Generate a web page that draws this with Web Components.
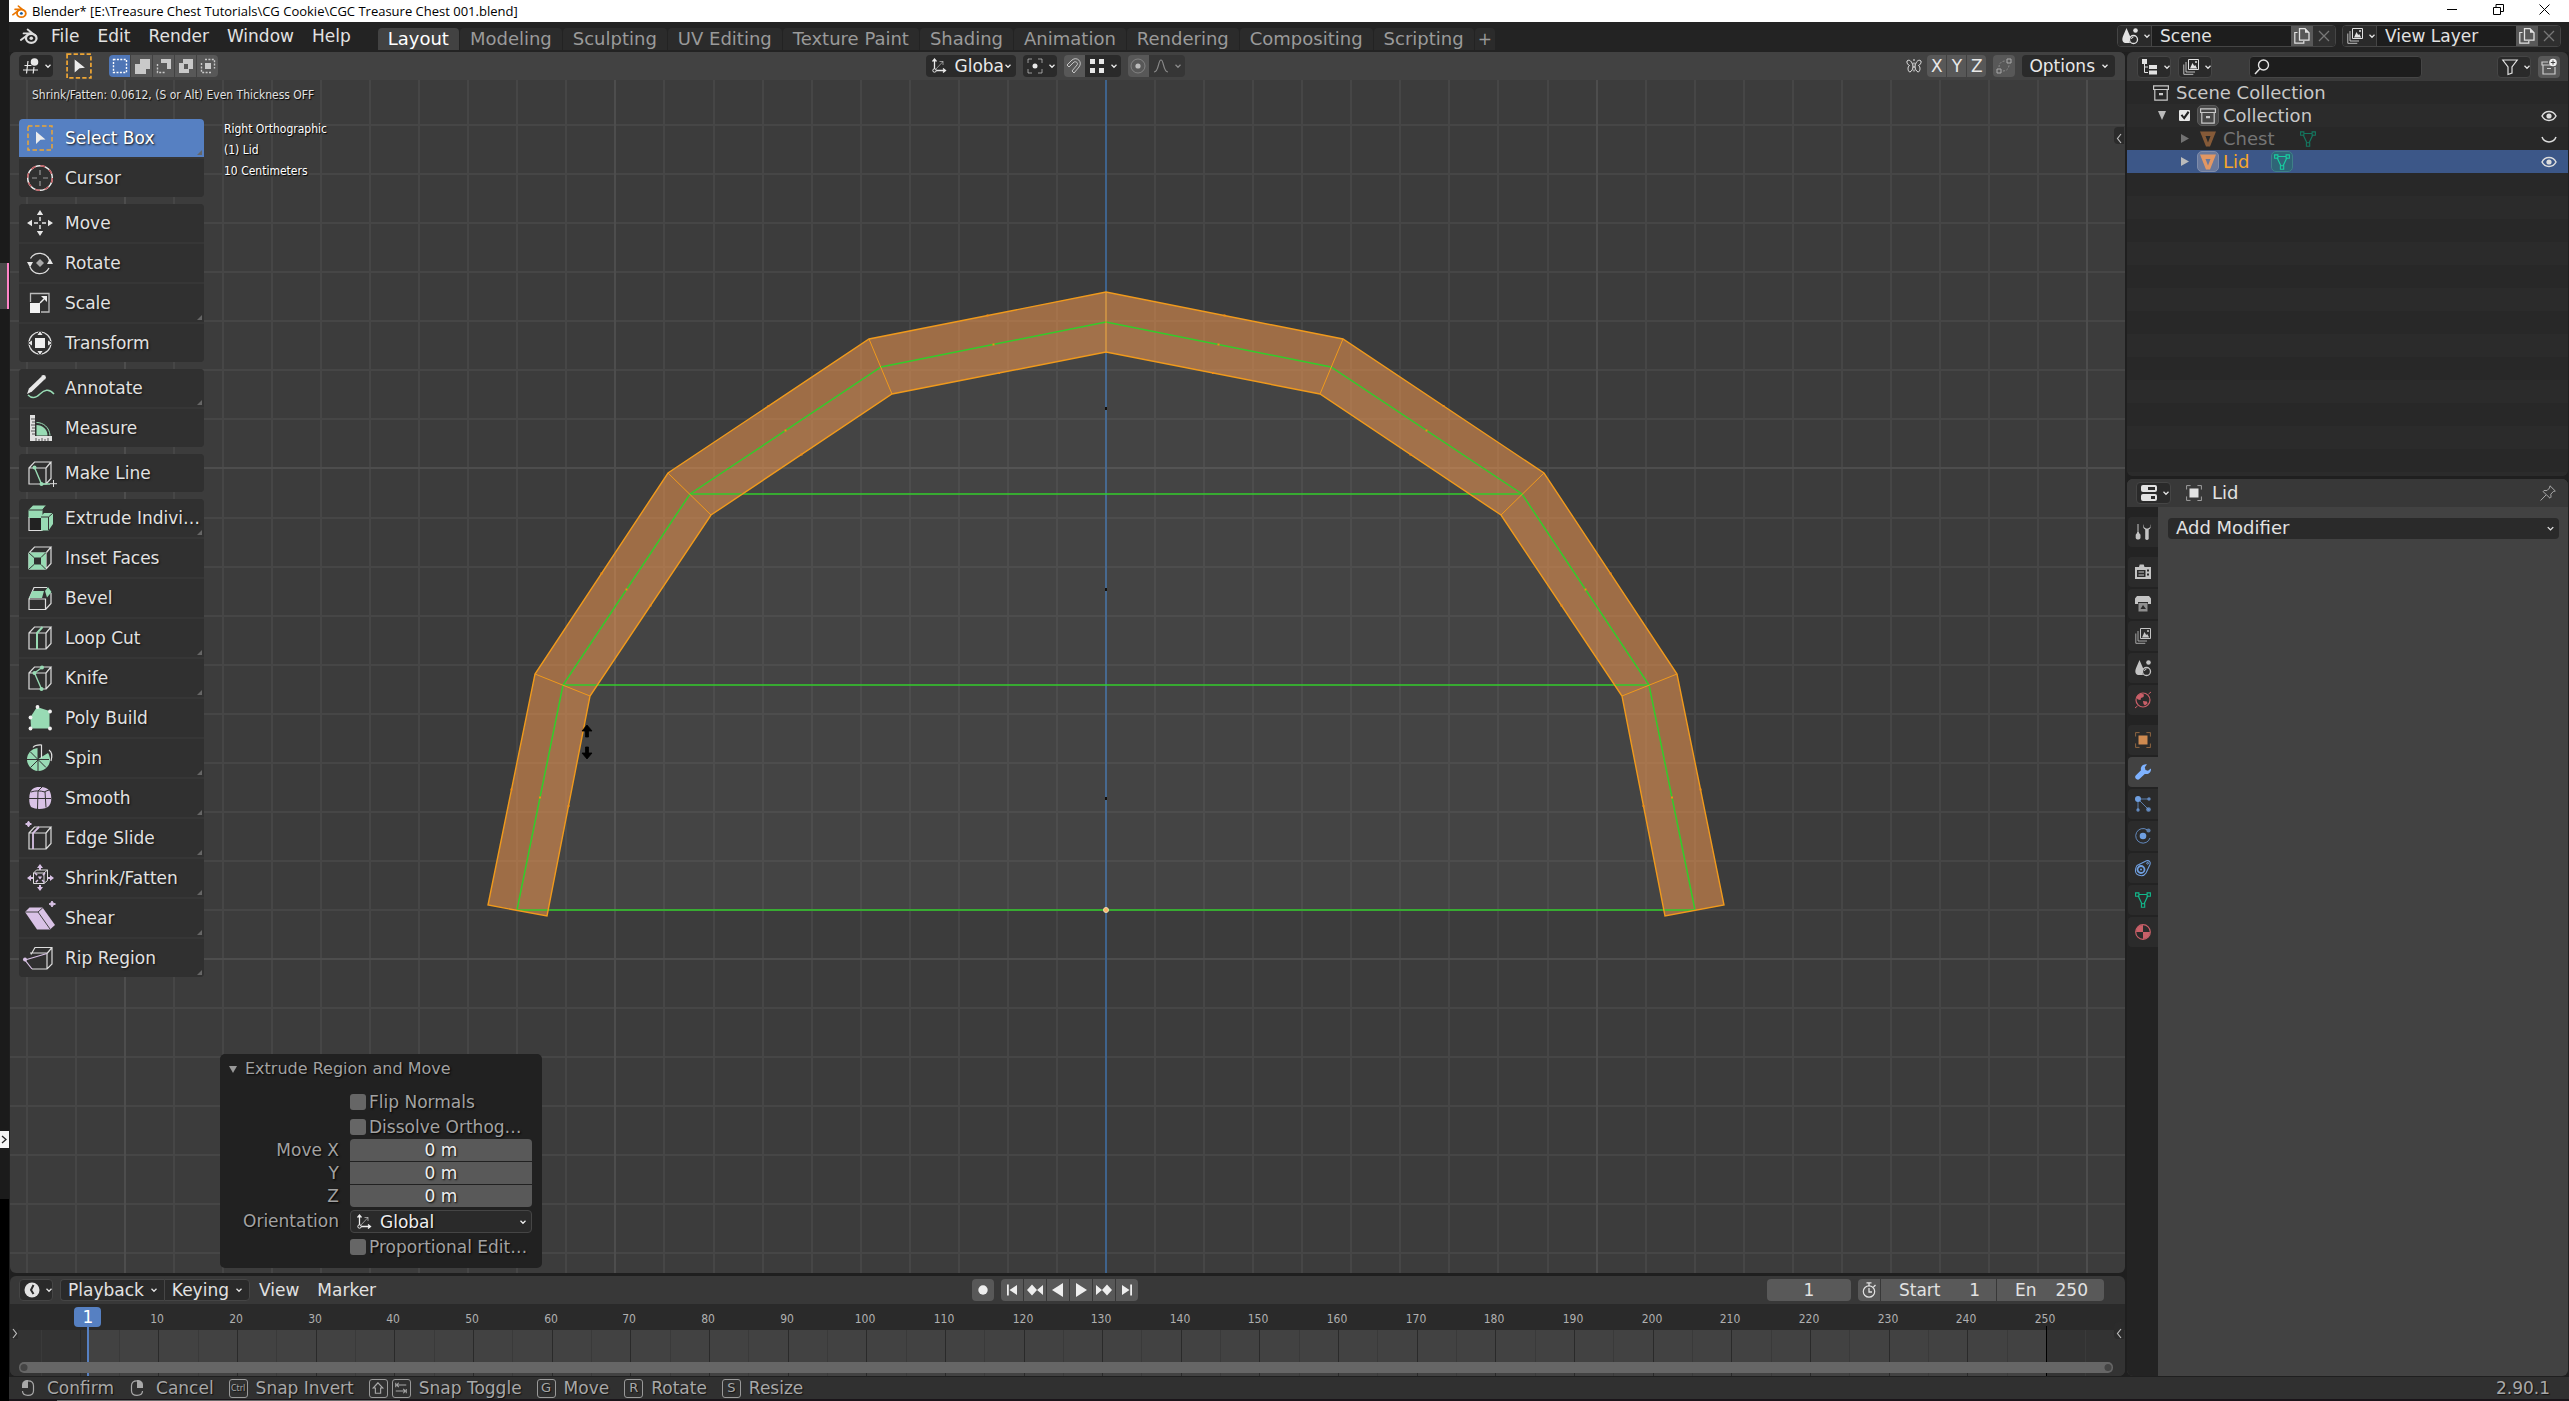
<!DOCTYPE html>
<html lang="en">
<head>
<meta charset="utf-8">
<title>Blender</title>
<style>
html,body{margin:0;height:100%;background:#1f1f1f}
body{font-family:"DejaVu Sans","Liberation Sans",sans-serif;font-size:17px;line-height:22px;color:#e2e2e2;overflow:hidden}
</style>
</head>
<body>
<blender-app></blender-app>
<script>
const BASE = `
*{box-sizing:border-box}
:host{display:block}
:host([hidden]){display:none}
button,input,select{font:inherit;color:inherit;margin:0;padding:0;border:0;background:none;outline:0;appearance:none;border-radius:0;text-shadow:inherit}
button{display:inline-flex;align-items:center;justify-content:center;white-space:nowrap}
`;
const define = (name, css, html, ready) => customElements.define(name, class extends HTMLElement {
  connectedCallback(){
    if(this.shadowRoot) return;
    const t = document.createElement('template');
    t.innerHTML = `<style>${BASE}${css}</style>` + (typeof html === 'function' ? html(this) : html);
    this.attachShadow({mode:'open'}).append(t.content.cloneNode(true));
    if(ready) ready(this.shadowRoot, this);
  }
});

/* ---------- icons: 16-unit grid for headers, 28-unit grid for tools ---------- */
const cube = '<path d="M3 9H20V25H3ZM3 9L8.500 3H25L20 9M25 3V19.500L20 25" fill="none" stroke="#dcdcdc" stroke-width="1.200"/>';
const S = 'fill="none" stroke="currentColor"';
const images = '<path d="M5.500 .5h10v10h-10z" '+S+'/><path d="M7 9.500L9.500 4l1.700 3 1-1 2 3.500z" fill="currentColor"/><circle cx="13" cy="3" r="1" fill="currentColor"/><path d="M3 3v10h9M.8 5.500v9.800h9.500" '+S+' opacity=".8"/>';
const meshTri = (c)=>`<path d="M3 3.500L7 12M13 3.500L9 12M4 2.500h8" fill="none" stroke="${c}" stroke-width="1.200"/><path d="M.6 .9h3.300v3.300H.6zM12.100 .9h3.300v3.300h-3.300zM6.400 11.800h3.300v3.500H6.400z" fill="none" stroke="${c}" stroke-width="1.100"/>`;
const ICONS = {
  logo:'<path d="M.8 11.500L8.500 5.700H3.200M6.800 2.200L14 8" fill="none" stroke="currentColor" stroke-width="1.700" stroke-linecap="round"/><ellipse cx="10" cy="10" rx="4.700" ry="4" fill="none" stroke="currentColor" stroke-width="2"/><circle cx="10" cy="10" r="1.600" fill="var(--eye,currentColor)"/>',
  chev:'<path d="M4 6l4 4 4-4" fill="none" stroke="currentColor" stroke-width="2"/>',
  view3d:'<circle cx="11.500" cy="4" r="3.800" fill="currentColor"/><path d="M5 3L3.500 15.500M11 9l-.8 6.500M1.500 7.500h7M0 12h15" '+S+' stroke-width="1.200"/>',
  axes:'<path d="M3.500 1.500v11h10M1.500 3.500l2-2.500 2 2.500M12 10.500l2.500 2-2.500 2" '+S+' stroke-width="1.300"/><path d="M4 12L12 3.500M8.500 3.500H12V7" '+S+' opacity=".55"/><circle cx="3.500" cy="12.500" r="1.700" fill="#2b2b2b" stroke="currentColor"/>',
  pivot:'<path d="M1 5V1h4M11 1h4v4M15 11v4h-4M5 15H1v-4" '+S+' opacity=".6"/><circle cx="8" cy="8" r="2.500" fill="currentColor"/>',
  magnet:'<path d="M1 7L6 2c5-4 11 2 7 7l-5 6-2-2 5-6c1.500-2-1-4-3-3L3 9z" '+S+' opacity=".75"/>',
  grid4:'<path d="M1 1h5v5H1zM10 1h5v5h-5zM1 10h5v5H1zM10 10h5v5h-5z" fill="currentColor"/>',
  prop:'<circle cx="8" cy="8" r="7" '+S+' opacity=".35"/><circle cx="8" cy="8" r="2.600" fill="currentColor" opacity=".85"/>',
  falloff:'<path d="M1 14c5 0 4-12 7-12s2 12 7 12" '+S+' stroke-width="1.200"/>',
  butterfly:'<path d="M7 8C6 3 3 1 1 3c-.5 2 1 4 2.500 4.500C1 9 2 14 4 14c2-1 3-3 3-6M9 8c1-5 4-7 6-5 .5 2-1 4-2.500 4.500C15 9 14 14 12 14c-2-1-3-3-3-6" '+S+'/><path d="M8 1v14" '+S+' stroke-dasharray="2 1.500"/>',
  curve:'<path d="M1 11h4v4H1zM11 1h4v4h-4z" '+S+'/><path d="M3 9C3 5 6 3 9 3M7 13c4 0 6-3 6-6" '+S+' stroke-dasharray="2 1.500" opacity=".6"/>',
  cursorbox:'<rect x="1" y="1" width="22" height="22" fill="none" stroke="#eda535" stroke-width="1.600" stroke-dasharray="4 2"/><path d="M8 6l9.500 7.500-5 .5L8 18z" fill="#ececec"/>',
  selnew:'<path d="M1.500 1.500h13v13h-13z" fill="none" stroke="#fff" stroke-width="1.400" stroke-dasharray="2 1.400"/>',
  selext:'<path d="M6 1h10v10h-4v5H1V6h5z" fill="currentColor"/>',
  selsub:'<path d="M5 1h10v10h-4V5H5z" fill="currentColor"/><path d="M1.500 6v8.500H9" '+S+' stroke-dasharray="2 1.400" stroke-width="1.400"/>',
  seldif:'<path d="M5 1h10v10h-4v4H1V5h4zM6 6v5h4V6z" fill="currentColor" fill-rule="evenodd"/>',
  selint:'<path d="M5 5h6v6H5z" fill="currentColor"/><path d="M5 1.500h9.500v9M11 14.500H1.500V5" '+S+' stroke-dasharray="2 1.400" stroke-width="1.400"/>',
  scene:'<path d="M4.500 0C6 4 8 7 8.500 10c-1.500 1-1.500 3-.5 5H3C-.5 14 0 10 1.500 7z" fill="currentColor"/><circle cx="13.500" cy="2.500" r="2.300" fill="currentColor"/><circle cx="11.500" cy="11.500" r="4" '+S+' stroke-width="1.300"/><path d="M9.500 11a2 2 0 0 1 2-2" '+S+'/>',
  images,
  copy:'<path d="M5.500 .7h5.500l4 4v7.500H5.500z" '+S+' stroke-width="1.300"/><path d="M11 .5v4.300h4z" fill="currentColor"/><path d="M3.500 4.500H.8v10.700h9V13" '+S+' stroke-width="1.200"/>',
  x:'<path d="M3 3l10 10M13 3L3 13" '+S+' stroke-width="1.300"/>',
  outliner:'<path d="M0 0h5v5H0zM7 6h8v4H7zM7 11.500h8v4H7z" fill="currentColor"/><path d="M2.500 5v8.500H6M2.500 8H6" '+S+'/>',
  search:'<circle cx="9.500" cy="6" r="5" '+S+' stroke-width="1.400"/><path d="M6 9.500L1 15" '+S+' stroke-width="1.500"/>',
  funnel:'<path d="M.8 1h14.400L10 8v6l-4 1.500V8z" '+S+' stroke-width="1.200"/>',
  newcol:'<path d="M7 3H1v3h14M2 6v9h12V8M6 9.500h4" '+S+' stroke-width="1.200"/><circle cx="12" cy="3.500" r="3.800" fill="#f0f0f0"/><path d="M12 1.300v4.400M9.800 3.500h4.400" stroke="#444"/>',
  collection:'<path d="M.6 .8h14.800v3.700H.6zM1.800 4.500v10.700h12.400V4.500" '+S+' stroke-width="1.200"/><path d="M6 8h4v2.200H6z" fill="currentColor"/>',
  tri:'<path d="M0 .5h16L10 15.500H6zM5.500 5L8 11.500 10.500 5z" fill="currentColor" fill-rule="evenodd"/>',
  mesh:meshTri('currentColor'),
  eye:'<path d="M1 8C4 2 12 2 15 8 12 14 4 14 1 8z" '+S+' stroke-width="1.500"/><circle cx="8" cy="8" r="2.600" fill="currentColor"/>',
  eyeoff:'<path d="M1 6c2.500 6.500 11.500 6.500 14 0" '+S+' stroke-width="1.500"/>',
  props:'<rect x="0" y="0" width="16" height="7" rx="2" fill="currentColor"/><rect x="0" y="9" width="16" height="7" rx="2" fill="currentColor"/><path d="M7 2h7v3H7zM10 11h4v3h-4z" fill="#2b2b2b"/>',
  object:'<path d="M.6 4.500V.6h4M11.400 .6h4v4M15.400 11.500v4h-4M4.500 15.400H.6v-4" '+S+' opacity=".6"/><path d="M3.500 3.500h9v9h-9z" fill="currentColor"/>',
  pin:'<path d="M10 .8L15.300 6l-2 .5-2.500 2.700.2 3-1 1L3 6.500l1-1 3 .1L9.500 3zM6 10L.6 15.500" '+S+'/>',
  tool:'<path d="M3 0v8" '+S+'/><path d="M.7 11c0-1.500 1.500-1 1.500-3h1.600c0 2 1.700 1.500 1.700 3v3c-1 2-4 2-4.800 0z" fill="currentColor"/><path d="M8.500 0c-1 3 0 4.500 1.700 5.500V15c1 1.300 2.500 1.300 3.500 0V5.500C15.500 4.500 16.500 3 15.400 0v3L13 4.500h-2L8.800 3z" fill="currentColor"/>',
  render:'<path d="M0 3h4l.7-2.500h4L9.500 3H16v12H0zM2 6v7h8.500V6zM12 5.500v2h2v-2zM12 9.500v2h2v-2z" fill="currentColor" fill-rule="evenodd"/><path d="M3.500 8H9M3.500 11H9" '+S+'/>',
  output:'<path d="M2 0h12l2 2.500V8h-3V6H3v2H0V2.500z" fill="currentColor"/><path d="M3.500 7h9v8.500h-9z" fill="currentColor" opacity=".65"/><path d="M5.500 13L8 9l3 4z" fill="#2b2b2b"/>',
  world:'<circle cx="8" cy="8" r="7" '+S+' stroke-width="1.200"/><path d="M2 4l4-2.500 3 1L8.500 5 6 6l-.5 2L3 7.500 1.500 6zM8 9l4 .5.5 2L10 13.500 8.500 12z" fill="currentColor"/><path d="M16 0l-2.500 2M0 16l2.500-2" '+S+'/>',
  wrench:'<path d="M15.900 4.500L13 6.800 10.500 6 9.800 3.200 12 .3C8.500-.6 5 2.500 6 6.200L.7 11.500c-2 2 1.600 5.600 3.700 3.600L9.800 9.900c3.700 1 6.900-2 6.100-5.400z" fill="currentColor"/>',
  particles:'<path d="M3 3h10M3 3v11M3 3l11 11" '+S+' opacity=".7"/><circle cx="3" cy="3" r="3" fill="currentColor"/><circle cx="14" cy="3" r="1.700" fill="currentColor" opacity=".8"/><circle cx="3" cy="14" r="1.700" fill="currentColor" opacity=".8"/><circle cx="13.500" cy="13.500" r="2.300" fill="currentColor" opacity=".8"/>',
  physics:'<path d="M12 1.700A7.300 7.300 0 1 0 15 10" '+S+' opacity=".8"/><circle cx="8" cy="8" r="3.300" fill="currentColor"/><circle cx="13.500" cy="2.500" r="2.100" fill="currentColor" opacity=".7"/>',
  constraint:'<path d="M2 5.500L11.500 .8C14 0 16 2 15 4.500L11 13C8 18-1 15.500 .7 9 .9 7.500 1.200 6.500 2 5.500z" '+S+' stroke-width="1.100"/><circle cx="6" cy="9.500" r="3.500" '+S+' stroke-width="1.800"/><circle cx="6" cy="9.500" r="1" fill="currentColor"/><circle cx="12.600" cy="3.300" r=".9" '+S+'/>',
  material:'<circle cx="8" cy="8" r="7.300" '+S+' stroke-width="1.200"/><path d="M8 8V1A7 7 0 0 0 1 8zM8 8v7a7 7 0 0 0 7-7z" fill="currentColor"/>',
  clock:'<circle cx="8" cy="8" r="7.500" fill="currentColor"/><path d="M9.500 3L7 8l2.500 4" fill="none" stroke="#2b2b2b" stroke-width="2"/>',
  watch:'<circle cx="8" cy="9.500" r="5.700" '+S+' stroke-width="1.200"/><path d="M5.500 .8h5M8 1v3M8 6v4h3M12.500 5L14.500 3" '+S+' stroke-width="1.300"/>',
  rec:'<circle cx="8" cy="8" r="4.700" fill="currentColor"/>',
  first:'<path d="M3 2.500h1.800v11H3zM13 3v10L5.500 8z" fill="currentColor"/>',
  pkey:'<path d="M5 2.500L10 8l-5 5.500L0 8zM16 3v10l-6-5z" fill="currentColor"/>',
  back:'<path d="M13 1v14L2 8z" fill="currentColor"/>',
  play:'<path d="M3 1v14l11-7z" fill="currentColor"/>',
  nkey:'<path d="M11 2.500L16 8l-5 5.500L6 8zM0 3v10l6-5z" fill="currentColor"/>',
  last:'<path d="M11.200 2.500H13v11h-1.800zM3 3v10l7.500-5z" fill="currentColor"/>',
  lmb:'<path d="M8 .8c4 0 5.500 1.500 5.500 5v5c0 3-2 4.500-5.500 4.500S2.500 13.800 2.500 11" '+S+' stroke-width="1.200"/><path d="M8 0v8H2V5c0-3 2-5 6-5z" fill="currentColor"/>',
  rmb:'<path d="M8 .8c-4 0-5.500 1.500-5.500 5v5c0 3 2 4.500 5.500 4.500s5.500-1.500 5.500-4.300" '+S+' stroke-width="1.200"/><path d="M8 0v8h6V5c0-3-2-5-6-5z" fill="currentColor"/>',
  shift:'<path d="M8 2L2.500 8H5v6h6V8h2.500z" '+S+' stroke-width="1.300"/>',
  tabkey:'<path d="M2 2v5M14 9v5M3 4.500h11M5.500 2L3 4.500 5.500 7M13 11.500H2M10.500 9l2.500 2.500-2.500 2.500" '+S+' stroke-width="1.200"/>',
  /* tools */
  t_select:'<rect x="2" y="2" width="24" height="24" fill="none" stroke="#eda535" stroke-width="1.500" stroke-dasharray="4.500 2.500"/><path d="M10 7.500l9.500 8-5 .3L10 20z" fill="#ececec"/>',
  t_cursor:'<circle cx="14" cy="14" r="12.300" fill="none" stroke="#eee" stroke-width="1.500"/><circle cx="14" cy="14" r="12.300" fill="none" stroke="#c05a5f" stroke-width="1.500" stroke-dasharray="4.800 4.860"/><path d="M14 6v5M14 17v5M6 14h5M17 14h5" stroke="#999" stroke-width="1.200"/>',
  t_move:'<path d="M14 1l3.200 5h-6.400zM14 27l3.200-5h-6.400zM1 14l5-3.200v6.400zM27 14l-5-3.200v6.400z" fill="#e6e6e6"/><path d="M14 8v4M14 16v4M8 14h4M16 14h4" stroke="#e6e6e6" stroke-width="1.500"/>',
  t_rotate:'<path d="M4.500 9.500a10.500 10.500 0 0 1 19 2M4 18a10.500 10.500 0 0 0 19 1" fill="none" stroke="#dcdcdc" stroke-width="1.300"/><path d="M1 13h6l-3 5.500zM21 15h6l-3-5.500z" fill="#e6e6e6"/><path d="M14 10l4 4-4 4-4-4z" fill="#aaa"/>',
  t_scale:'<path d="M4.500 13V4.500h18.500v18.500H15" fill="none" stroke="#bbb" stroke-width="1.300"/><path d="M4 14h10v10H4z" fill="#f2f2f2"/><path d="M14 14l4-4" stroke="#eee" stroke-width="1.500"/><path d="M21 7v6l-6-6z" fill="#eee"/>',
  t_transform:'<circle cx="14" cy="14" r="11" fill="none" stroke="#ddd" stroke-width="1.200"/><path d="M9 9h10v10H9z" fill="#f0f0f0"/><path d="M10.500 6.500L14 1.500l3.500 5zM10.500 21.500L14 26.500l3.500-5zM6.500 10.500L1.500 14l5 3.500zM21.500 10.500L26.500 14l-5 3.500z" fill="#e6e6e6" stroke="#303030"/>',
  t_annotate:'<path d="M1 20L3 14.500 15 3l3 3L6 17.500z" fill="#e8e8e8"/><circle cx="17.500" cy="3.500" r="2.400" fill="#e8e8e8"/><path d="M2 21c4 4 8 3 12-1s9-6 14 0" fill="none" stroke="#98dbb4" stroke-width="1.400"/>',
  t_measure:'<path d="M4 1h5v21h17v5H4z" fill="#e0e0e0"/><path d="M5 5h4M6 8h3M5 11h4M6 14h3M5 17h4M6 20h3M10 27v-3M13 27v-2M16 27v-3M19 27v-2M22 27v-3" stroke="#555"/><path d="M10.500 21.500V11c6 0 11 4.500 11 10.500z" fill="#98dbb4"/><path d="M10.500 8.500c7 0 13 5 13.500 13" fill="none" stroke="#98dbb4"/>',
  t_line:cube+'<path d="M8.500 8.500L15.500 25H24" stroke="#98dbb4" stroke-width="1.400" fill="none"/><circle cx="8.500" cy="8.500" r="2" fill="#98dbb4"/><circle cx="15.500" cy="25" r="2" fill="#98dbb4"/><path d="M27.500 21v7M24 24.700h7" stroke="#ddd"/>',
  t_extrude:'<path d="M3 13.500h13v13H3z" fill="#222" stroke="#ddd" stroke-width="1.200"/><path d="M2.500 6L7 1.500h13L16.500 6v8h-14zM15 13l3-4h9v11l-4.500 6.500H15z" fill="#98dbb4"/><path d="M2.500 6h14l3.500-4.500M15 13h7.500L27 9M22.500 13v13" fill="none" stroke="#333"/>',
  t_inset:cube+'<path d="M2.500 8.500H20V25.500H2.500z" fill="#98dbb4"/><path d="M8 13.500h7v7H8z" fill="#303030"/><path d="M2.500 8.500L8 13.500M20 8.500l-5 5M2.500 25.500L8 20.500M20 25.500l-5-5" stroke="#333"/>',
  t_bevel:'<path d="M3 15h16.500v10.500H3zM3 15L8 3.500h13M25 9v10.500L19.500 25.500" fill="none" stroke="#dcdcdc" stroke-width="1.200"/><path d="M3 14L6.500 7h11.500l-2 7zM19 7l3-4 3.500 5-4.500 5.500z" fill="#98dbb4"/>',
  t_loop:cube+'<path d="M11 25V9L16.500 3" fill="none" stroke="#98dbb4" stroke-width="2"/>',
  t_knife:cube+'<path d="M16 3.500L8.500 9 15.500 25" fill="none" stroke="#98dbb4" stroke-width="1.400"/><circle cx="16" cy="3.500" r="2" fill="#98dbb4"/><circle cx="8.500" cy="9" r="2" fill="#98dbb4"/><circle cx="15.500" cy="25" r="2" fill="#98dbb4"/>',
  t_poly:'<path d="M11 3L23.500 7v17.500H5L4.500 13z" fill="#98dbb4"/><g fill="#f0f0f0"><circle cx="11.500" cy="3" r="1.900"/><circle cx="24" cy="7.500" r="1.900"/><circle cx="4.500" cy="13.500" r="1.900"/><circle cx="4.500" cy="24.500" r="1.900"/><circle cx="24" cy="24.500" r="1.900"/></g>',
  t_spin:'<path d="M12 15V4A11.500 11.500 0 1 0 22 9z" fill="#98dbb4"/><path d="M12 4V27M1 15.500h22M4.500 8L20 23.500M12.500 15.500L4.500 23.500" stroke="#333" fill="none"/><path d="M7 3.500C9 1 12 .8 15.500 1v13M23 6c3 2 3.500 6 2 11" fill="none" stroke="#e0e0e0" stroke-width="1.200"/>',
  t_smooth:'<path d="M3.500 11C5 5 8 3 13 3c6 0 11 1 12 8 .6 4 .5 8-2 11-3 3.500-13 4-18 1-2-3-2-8-1.500-12z" fill="#d9c2e6"/><path d="M5 8c4-1.500 9-1.500 14 0M3 14.500h22M12 7l-.5 18M12 7l4-4M19 7.500l1 16M19 7.500L23 6" stroke="#333" fill="none"/>',
  t_edge:cube+'<path d="M7 25V9L13 3" fill="none" stroke="#d9c2e6" stroke-width="1.800"/><path d="M2.500-3l1 2 2 1-2 1-1 2-1-2-2-1 2-1z" fill="#d9c2e6" stroke="#d9c2e6"/>',
  t_shrink:'<path d="M7.500 9h10.500v10.500H7.500zM7.500 9l3-3h11v10.500L18 19.500M18 9l3.500-3" fill="none" stroke="#dcdcdc"/><path d="M9 9l10 10M19 9L9 19" stroke="#d9c2e6" stroke-dasharray="3 2" stroke-width="1.500"/><path d="M14 0l3 4h-2v2h-2V4h-2zM14 27l3-4h-2v-2h-2v2h-2zM1 14l4-3v2h2v2H5v2zM28 14l-4-3v2h-2v2h2v2z" fill="#d9c2e6"/>',
  t_shear:'<path d="M-1 8L3.500 3.500h13L29 21l-5 4.500H11z" fill="#d9c2e6"/><path d="M-1 8h13l5-4.500M12 8l12 17" fill="none" stroke="#444"/><path d="M26-3l1 2 2.500 1-2.500 1-1 2-1-2-2-1 2-1z" fill="#d9c2e6" stroke="#d9c2e6"/>',
  t_rip:'<path d="M5 10.500L9 3.500H26V20l-5 5H6M21 9.500V25M21 9.500L26 3.500M4 9h17" fill="none" stroke="#dcdcdc" stroke-width="1.200"/><path d="M6 25L-1 16 21 9.500" fill="none" stroke="#d9c2e6" stroke-width="1.200"/><circle cx="-1" cy="15.500" r="2" fill="#d9c2e6"/>'
};
define('ui-icon', `:host{display:inline-flex;flex:none}svg{display:block;overflow:visible}`, el => {
  const n = el.getAttribute('name'), s = el.getAttribute('size') || 16;
  const v = n.startsWith('t_') ? 28 : n === 'cursorbox' ? 24 : 16;
  return `<svg width="${s}" height="${s}" viewBox="0 0 ${v} ${v}" aria-hidden="true">${ICONS[n]}</svg>`;
});

/* header drop-down button: icon and/or slotted label, then a chevron */
define('ui-drop', `
:host{display:inline-flex;height:22px;border-radius:4px;background:#2a2a2a;flex:none}
:host([lined]){border:1px solid #454545}
button{flex:1;padding:0 4px;gap:2px}
button.text{padding:0 5px 0 7px;gap:5px}
slot{display:inline}`, el => `<button type="button" class="${el.textContent.trim()?'text':''}" aria-label="${el.getAttribute('label')||el.textContent}">${el.hasAttribute('icon')?`<ui-icon name="${el.getAttribute('icon')}"></ui-icon>`:''}<slot></slot><ui-icon name="chev" size="10"></ui-icon></button>`);

/* small square icon button */
define('ui-tile', `
:host{display:inline-flex;width:22px;height:22px;background:#585858;flex:none}
button{width:100%;height:100%}`, el => `<button type="button" aria-label="${el.getAttribute('label')}"><ui-icon name="${el.getAttribute('icon')}"></ui-icon></button>`);

/* drop-down list with an axes icon */
define('ui-select', `
:host{display:inline-flex;height:22px;border-radius:4px;background:#2a2a2a;overflow:hidden;flex:none}
label{display:flex;align-items:center;flex:1;min-width:0;padding:0 3px 0 5px;gap:6px}
select{flex:1;min-width:0;height:100%;overflow:hidden;padding-left:2px;font-size:17px}
ui-icon[name=chev]{margin-left:-6px}`, el => `<label><ui-icon name="axes"></ui-icon><select aria-label="${el.getAttribute('label')}"><option>${el.getAttribute('value')}</option></select><ui-icon name="chev" size="10"></ui-icon></label>`);

define('left-edge', `
:host{width:9px;flex:none;display:flex;flex-direction:column;background:#1b1b1b}
.a{flex:263 0 0}.tab{height:46px;background:#4a4a4a;border-right:2px solid #ff84c8}
.b{flex:822 0 0}.knob{height:17px;background:#f4f4f4;color:#222;display:flex;align-items:center;justify-content:center}
.c{flex:51 0 0}.d{flex:202 0 0;background:#000}`,
`<div class="a"></div><div class="tab"></div><div class="b"></div><div class="knob"><svg width="7" height="9"><path d="M1 1l4 3.500-4 3.500" fill="none" stroke="#222" stroke-width="1.300"/></svg></div><div class="c"></div><div class="d"></div>`);

define('title-bar', `
:host{display:flex;align-items:center;height:22px;background:#fff;color:#000;padding:0 2px 0 3px;font:13px/20px "Open Sans","Noto Sans",sans-serif;flex:none}
ui-icon{color:#ea7600;--eye:#1b5a9a;margin-right:5px}
span{flex:1}
button{width:46px;height:18px;align-self:start}`,
`<ui-icon name="logo" size="15"></ui-icon><span>Blender* [E:\\Treasure Chest Tutorials\\CG Cookie\\CGC Treasure Chest 001.blend]</span>
<button type="button" aria-label="Minimize"><svg width="10" height="10"><path d="M0 5.500h10" stroke="#000"/></svg></button>
<button type="button" aria-label="Restore"><svg width="11" height="11"><path d="M.5 3.500h7v7h-7zM3 3.500V.5h7.500v7H8" fill="none" stroke="#000"/></svg></button>
<button type="button" aria-label="Close"><svg width="11" height="11"><path d="M.5 .5l10 10M10.500 .5l-10 10" stroke="#000"/></svg></button>`);

define('data-picker', `
:host{display:flex;height:22px;width:219px;border:1px solid #454545;border-radius:4px;background:#1d1d1d;flex:none;overflow:hidden}
ui-drop{width:34px;height:20px;border-radius:0;border-right:1px solid #454545}
input{flex:1;min-width:0;padding-left:8px;font-size:17px}
ui-tile{height:20px}ui-tile.x{background:#2f2f2f;color:#777}`, el => `<ui-drop icon="${el.getAttribute('icon')}" label="${el.getAttribute('value')} list"></ui-drop><input aria-label="Name" value="${el.getAttribute('value')}"><ui-tile icon="copy" label="New"></ui-tile><ui-tile class="x" icon="x" label="Remove"></ui-tile>`);

define('menu-bar', `
:host{display:flex;height:30px;background:#232323;flex:none;padding:0 8px 0 11px}
nav{display:flex;align-items:center;height:28px}
nav ui-icon{margin-right:4px;color:#ddd}
nav button{padding:0 9px;height:22px}
.tabs{display:flex;gap:1px;align-items:end;padding-left:18px;height:28px;flex:1}
.tabs button{height:22px;padding:0 10px;background:#2b2b2b;color:#9a9a9a;border-radius:4px 4px 0 0;font-size:18px}
.tabs button[aria-selected=true]{background:#424242;color:#fff}
.tabs button:last-child{padding:0 3px;font-size:17px}
.pick{display:flex;gap:6px;padding-top:3px}`,
`<nav><ui-icon name="logo" size="18"></ui-icon>${['File','Edit','Render','Window','Help'].map(t=>`<button type="button">${t}</button>`).join('')}</nav>
<div class="tabs" role="tablist">${['Layout','Modeling','Sculpting','UV Editing','Texture Paint','Shading','Animation','Rendering','Compositing','Scripting','+'].map((t,i)=>`<button type="button" role="tab" aria-selected="${!i}">${t}</button>`).join('')}</div>
<div class="pick"><data-picker icon="scene" value="Scene"></data-picker><data-picker icon="images" value="View Layer"></data-picker></div>`);

define('view-header', `
:host{display:grid;grid-template-columns:1fr auto 1fr;align-items:center;height:28px;padding:0 10px 0 9px;background:#424242;color:#e8e8e8}
div{display:flex;align-items:center}
.mode{gap:1px;margin-left:17px}.mode ui-tile{width:21px;color:#c9c9c9}
.mode ui-tile:first-child{background:#4f76b6;border-radius:4px 0 0 4px}.mode ui-tile:last-child{border-radius:0 4px 4px 0}
.l>ui-icon{margin-left:13px}
.m{gap:7px;margin-right:24px}.m ui-select{width:90px}.m ui-drop,.l>ui-drop{width:34px}
.pair ui-tile{border-radius:4px 0 0 4px;width:21px}.pair ui-drop{border-radius:0 4px 4px 0;width:36px}
.dim{color:#8a8a8a}.dim ui-drop{background:#363636}.dim ui-tile{color:#ccc}
.r{justify-content:flex-end;gap:7px}
.xyz{gap:1px}.xyz button{background:#585858;height:22px;width:19px}
.xyz button:first-child{border-radius:4px 0 0 4px}.xyz button:last-child{border-radius:0 4px 4px 0}
.r>ui-icon{margin-right:-2px}.r>ui-tile{border-radius:4px;color:#aaa}`,
`<div class="l"><ui-drop icon="view3d" label="Editor type"></ui-drop><ui-icon name="cursorbox" size="26"></ui-icon>
<div class="mode">${['selnew','selext','selsub','seldif','selint'].map(i=>`<ui-tile icon="${i}" label="${i}"></ui-tile>`).join('')}</div></div>
<div class="m"><ui-select value="Global" label="Transform orientation"></ui-select><ui-drop icon="pivot" label="Pivot"></ui-drop>
<div class="pair"><ui-tile icon="magnet" label="Snap"></ui-tile><ui-drop icon="grid4" label="Snap to"></ui-drop></div>
<div class="pair dim"><ui-tile icon="prop" label="Proportional"></ui-tile><ui-drop icon="falloff" label="Falloff"></ui-drop></div></div>
<div class="r"><ui-icon name="butterfly"></ui-icon><div class="xyz"><button type="button">X</button><button type="button">Y</button><button type="button">Z</button></div><ui-tile icon="curve" label="Auto merge"></ui-tile><ui-drop>Options</ui-drop></div>`);

/* mesh drawing on the orthographic grid */
const X0 = 1106, STEP = 49.06;
const scene = (() => {
  let minor = '', major = '';
  for(let i=-22;i<=20;i++){ const x = Math.round(X0+i*STEP); if(i%10) minor += `M${x} 80V1273`; else if(i) major += `M${x} 80V1273`; }
  for(let i=-16;i<=7;i++){ const y = Math.round(910+i*STEP); if((i-1)%10) minor += `M10 ${y}H2125`; else major += `M10 ${y}H2125`; }
  const outer=[[488,905],[535,674],[668,473],[869,339],[1106,292]], inner=[[547,916],[590,696],[711,515],[892,394],[1106,352]], mid=[[517,910],[563,685],[690,494],[881,367],[1106,322]];
  const mir = p => [2*X0-p[0],p[1]];
  const full = a => a.concat(a.slice(0,-1).reverse().map(mir));
  const O=full(outer), I=full(inner), M=full(mid);
  const pts = a => a.map(p=>p.join()).join(' ');
  const dots = a => a.slice(1).map((p,i)=>`<rect x="${(p[0]+a[i][0])/2-1}" y="${(p[1]+a[i][1])/2-1}" width="2" height="2"/>`).join('');
  return `<g shape-rendering="crispEdges" stroke-width="2"><path d="${minor}" stroke="#464646"/><path d="${major}" stroke="#4d4d4d"/><path d="M1106 80V1273" stroke="#3f638c"/></g>
  <polygon points="${pts(M)}" fill="#fff" fill-opacity=".045"/>
  <polygon points="${pts(O)} ${pts(I.slice().reverse())}" fill="#ff9e50" fill-opacity=".5"/>
  <g stroke="#33cc2b" fill="none" stroke-width="1.500"><path d="M690 494H1522M563 685H1649M517 910H1695"/><polyline points="${pts(M)}"/></g>
  <g stroke="#f09a1c" fill="none" stroke-width="1.400"><polygon points="${pts(O)} ${pts(I.slice().reverse())}"/>${O.slice(1,-1).map((p,i)=>`<path d="M${p}L${I[i+1]}" stroke-width="1"/>`).join('')}</g>
  <g fill="#f08c14">${dots(O)}${dots(M)}${dots(I)}</g>
  <path d="M1105 407h2v3h-2zM1105 588h2v3h-2zM1105 797h2v3h-2z" fill="#111"/>
  <circle cx="1106" cy="910" r="2.500" fill="#ffb26b" stroke="#e8e0b0"/>
  <path d="M587 725l-5 6h3.500v6h3v-6h3.500zM587 759l-5-6h3.500v-6h3v6h3.500z" fill="#000" stroke="#000" stroke-width=".8"/>`;
})();

const TOOLS = [['Select Box:select:1','Cursor:cursor'],['Move:move','Rotate:rotate','Scale:scale:1','Transform:transform'],['Annotate:annotate:1','Measure:measure'],['Make Line:line'],
['Extrude Indivi…:extrude:1','Inset Faces:inset','Bevel:bevel','Loop Cut:loop:1','Knife:knife:1','Poly Build:poly','Spin:spin:1','Smooth:smooth:1','Edge Slide:edge:1','Shrink/Fatten:shrink:1','Shear:shear:1','Rip Region:rip:1']];
define('tool-shelf', `
:host{display:flex;flex-direction:column;gap:7px;width:185px;text-shadow:1px 1px 2px #111}
.g{display:flex;flex-direction:column;gap:2px;border-radius:4px;overflow:hidden;background:#363636}
button{height:38px;background:#303030;padding-left:7px;gap:11px;justify-content:flex-start;position:relative}
button[aria-pressed=true]{background:#5680c2;color:#fff}
.more::after{content:"";position:absolute;right:2px;bottom:2px;border:solid transparent;border-width:5px 0 0 5px;border-bottom:5px solid #666;border-top:0}`,
TOOLS.map(g=>`<div class="g">${g.map(t=>{const [n,i,m]=t.split(':');return `<button type="button" aria-pressed="${n==='Select Box'}" class="${m?'more':''}"><ui-icon name="t_${i}" size="28"></ui-icon>${n}</button>`}).join('')}</div>`).join(''));

define('redo-panel', `
:host{width:322px;border-radius:5px;background:#212121;color:#a2a2a2;padding:3px 10px 9px 9px;text-shadow:1px 1px 2px #000}
h2{margin:0;font:inherit;font-size:16px;display:flex;align-items:center;gap:8px;height:24px}
h2::before{content:"";border:4px solid transparent;border-top:7px solid #999;border-bottom:0}
.f{display:grid;grid-template-columns:110px minmax(0,1fr);column-gap:11px;margin-top:8px}
.n{text-align:right;line-height:22px}
.c{grid-column:2;display:flex;align-items:center;gap:3px;height:25px;white-space:nowrap}
.c input{width:16px;height:16px;border-radius:3px;background:#666}
.num{display:contents}
.num input{height:22px;background:#595959;color:#eee;text-align:center;width:100%;margin-bottom:1px}
.num .top{border-radius:4px 4px 0 0}.num .bot{border-radius:0 0 4px 4px}
ui-select{border:1px solid #454545;color:#eee;height:23px;margin:2px 0 1px}
.o{padding-top:2px}`,
`<h2>Extrude Region and Move</h2><div class="f">
<label class="c"><input type="checkbox">Flip Normals</label><label class="c"><input type="checkbox">Dissolve Orthog…</label>
<div class="num"><label class="n" for="x">Move X</label><input id="x" class="top" value="0 m"></div>
<div class="num"><label class="n" for="y">Y</label><input id="y" value="0 m"></div>
<div class="num"><label class="n" for="z">Z</label><input id="z" class="bot" value="0 m"></div>
<span class="n o">Orientation</span><ui-select value="Global" label="Orientation"></ui-select>
<label class="c"><input type="checkbox">Proportional Edit…</label></div>`);
define('side-tab', `:host{position:absolute;width:10px;height:17px;background:#2b2b2b;color:#aaa;border-radius:4px 0 0 4px}button{width:10px;height:17px}`,
el=>`<button type="button" aria-label="Sidebar"><svg width="6" height="11"><path d="${el.hasAttribute('left')?'M1 1l3.500 4.500L1 10':'M5 1L1.500 5.500 5 10'}" fill="none" stroke="#bbb" stroke-width="1.200"/></svg></button>`);

define('view-3d', `
:host{display:flex;flex-direction:column;border-radius:6px;overflow:hidden;background:#3c3c3c;min-height:0}
.body{flex:1;position:relative;min-height:0;display:flex;flex-direction:column}
svg.s{position:absolute;inset:0;width:100%;height:100%}
.op{position:relative;padding:7px 0 0 22px;height:39px;font:12px/16px "DejaVu Sans Condensed","DejaVu Sans",sans-serif;text-shadow:1px 1px 1px #000}
.row{flex:1;display:flex;position:relative;padding:0 0 5px 9px;gap:16px;min-height:0}
.col{display:flex;flex-direction:column;justify-content:space-between}
.info{font:12px/21px "DejaVu Sans Condensed","DejaVu Sans",sans-serif;color:#fff;text-shadow:1px 1px 1px #000;padding-left:4px}
side-tab{right:1px;top:47px}`,
`<view-header></view-header><div class="body"><svg class="s" viewBox="10 80 2115 1193" preserveAspectRatio="xMidYMid slice">${scene}</svg>
<div class="op">Shrink/Fatten: 0.0612, (S or Alt) Even Thickness OFF</div>
<div class="row"><tool-shelf></tool-shelf><div class="col"><div class="info"><div>Right Orthographic</div><div>(1) Lid</div><div>10 Centimeters</div></div><redo-panel></redo-panel></div></div><side-tab></side-tab></div>`);

const ticks = (() => {
  let s=''; const fx=f=>Math.round(87.7+(f-1)*7.864-10);
  for(let f=-5;f<=255;f+=5){ const m=f%10===0; s+=`<path d="M${fx(f)+.5} ${m&&f>0?22:26}V72" stroke="${f===250?'#000':m?'#2a2a2a':'#3a3a3a'}"/>`; if(m&&f>0) s+=`<text x="${fx(f)-1}" y="19">${f}</text>`; }
  return s;
})();
define('time-line', `
:host{display:flex;flex-direction:column;height:100px;border-radius:6px;overflow:hidden;background:#383838;position:relative;flex:none}
header{display:grid;grid-template-columns:1fr auto 1fr;align-items:center;height:28px;padding:0 21px 0 9px}
header div{display:flex;align-items:center}
.a>ui-drop{width:34px}
.menus{margin-left:7px}.menus ui-drop{height:22px}.menus ui-drop:first-child{border-radius:4px 0 0 4px;border-right:0}.menus ui-drop:last-child{border-radius:0 4px 4px 0}
.a button{padding:0 9px}
.b{gap:7px;color:#eee;margin-right:14px}.b>ui-tile{border-radius:4px}.t{gap:1px}.t ui-tile:first-child{border-radius:4px 0 0 4px}.t ui-tile:last-child{border-radius:0 4px 4px 0}
.c{justify-content:flex-end;gap:7px}
.c .cur{width:84px;height:22px;background:#595959;border-radius:4px;text-align:center}
.rng{gap:1px}.rng ui-tile{border-radius:4px 0 0 4px}
.rng label{display:flex;background:#595959;height:22px;padding:0 16px 0 18px;width:115px}
.rng label:last-child{width:107px;border-radius:0 4px 4px 0}
.rng input{flex:1;min-width:0;text-align:right}
svg.r{display:block;width:100%;height:72px}
text{font:12px "DejaVu Sans Condensed","DejaVu Sans",sans-serif;fill:#b0b0b0;text-anchor:middle}
.now{font:17px "DejaVu Sans",sans-serif;fill:#fff}
side-tab{top:46px}.rt{right:1px}.lt{left:0;width:8px}`,
`<header><div class="a"><ui-drop lined icon="clock" label="Editor type"></ui-drop><div class="menus"><ui-drop lined>Playback</ui-drop><ui-drop lined>Keying</ui-drop></div><button type="button">View</button><button type="button">Marker</button></div>
<div class="b"><ui-tile icon="rec" label="Record"></ui-tile><div class="t">${['first','pkey','back','play','nkey','last'].map(i=>`<ui-tile icon="${i}" label="${i}"></ui-tile>`).join('')}</div></div>
<div class="c"><input class="cur" aria-label="Current frame" value="1"><div class="rng"><ui-tile icon="watch" label="Preview range"></ui-tile><label>Start<input value="1"></label><label>En<input value="250"></label></div></div></header>
<svg class="r" viewBox="0 0 2115 72" preserveAspectRatio="xMinYMin slice"><path d="M0 0h2115v26H0z" fill="#2a2a2a"/><path d="M0 26h2115v46H0z" fill="#333"/><path d="M78 26H2036V72H78z" fill="#424242"/>${ticks}
<path d="M78 20V72" stroke="#5680c2" stroke-width="2"/><rect x="64" y="3" width="27" height="20" rx="4" fill="#5680c2"/><text class="now" x="78" y="19">1</text>
<rect x="9" y="58" width="2094" height="11" rx="5" fill="#666"/><circle cx="14" cy="63.500" r="3.500" fill="#444"/><circle cx="2098" cy="63.500" r="3.500" fill="#444"/></svg>
<side-tab class="lt" left></side-tab><side-tab class="rt"></side-tab>`);

define('scene-outliner', `
:host{display:flex;flex-direction:column;height:424px;border-radius:6px;overflow:hidden;background:#282828;flex:none}
header{display:flex;align-items:center;height:29px;background:#3a3a3a;padding:0 8px 0 10px;gap:7px;flex:none}
header>ui-drop{width:34px}
.find{width:173px;height:22px;background:#1d1d1d;border:1px solid #454545;border-radius:4px;display:flex;align-items:center;padding:0 4px;margin:0 auto 0 30px}
.find input{flex:1;min-width:0}
ui-tile{border-radius:4px;color:#ccc}
.rows{flex:1;font-size:18px;background:repeating-linear-gradient(#282828 0 23px,#2b2b2b 23px 46px);color:#c8c8c8}
.row{height:23px;display:flex;align-items:center;padding-right:11px}
.row span{flex:none}
.row>ui-icon:last-child{margin-left:auto;color:#ddd}
.pill{width:22px;height:21px;border-radius:5px;display:inline-flex;align-items:center;justify-content:center;margin-right:4px;flex:none}
.pill.on{background:#484848;border:1px solid #5a5a5a}
.d,.e{width:8px;height:9px;background:#bbb;clip-path:polygon(0 0,100% 0,50% 100%);flex:none}
.e{clip-path:polygon(0 0,100% 50%,0 100%);margin-right:8px}
input[type=checkbox]{width:11px;height:11px;background:#e6e6e6;border-radius:1px;margin:0 7px 0 13px;flex:none}
input[type=checkbox]::before{content:"";display:block;width:11px;height:11px;background:#222;clip-path:polygon(15% 50%,30% 38%,45% 58%,80% 10%,95% 22%,48% 88%)}
.l0{padding-left:23px}.l1{padding-left:31px}.l2{padding-left:54px}
.off{color:#757575}.off .e{opacity:.5}.sel{background:#3c5788;color:#f5a62a}
.sel .pill{background:#68789c;border:1px solid #7f8caa;color:#e29763}
.sel .pill.m{background:#2f6577;border-color:#3f8088;color:#18cda0}
.off .pill{color:#855a38}.off .pill.m{color:#14775f}
.m{margin-left:22px}`,
`<header><ui-drop lined icon="outliner" label="Editor type"></ui-drop><ui-drop lined icon="images" label="Display mode"></ui-drop><label class="find"><ui-icon name="search"></ui-icon><input type="search" aria-label="Search"></label><ui-drop lined icon="funnel" label="Filter"></ui-drop><ui-tile icon="newcol" label="New collection"></ui-tile></header>
<div class="rows" role="tree">
<div class="row l0"><span class="pill"><ui-icon name="collection"></ui-icon></span><span>Scene Collection</span></div>
<div class="row l1"><i class="d"></i><input type="checkbox" checked aria-label="Collection enabled"><span class="pill on"><ui-icon name="collection"></ui-icon></span><span>Collection</span><ui-icon name="eye"></ui-icon></div>
<div class="row l2 off"><i class="e"></i><span class="pill"><ui-icon name="tri"></ui-icon></span><span>Chest</span><span class="pill m"><ui-icon name="mesh"></ui-icon></span><ui-icon name="eyeoff"></ui-icon></div>
<div class="row l2 sel"><i class="e"></i><span class="pill"><ui-icon name="tri"></ui-icon></span><span>Lid</span><span class="pill m"><ui-icon name="mesh"></ui-icon></span><ui-icon name="eye"></ui-icon></div>
</div>`);

define('property-editor', `
:host{display:flex;flex-direction:column;flex:1;border-radius:6px;overflow:hidden;background:#424242;min-height:0}
header{display:flex;align-items:center;height:28px;background:#383838;padding:0 12px 0 9px;flex:none}
header ui-drop{width:35px;margin-right:15px}
header span{font-size:18px;padding-left:10px;flex:1}
header>ui-icon:last-child{color:#a8a8a8}
.b{flex:1;display:flex;min-height:0}
nav{width:31px;background:#232323;padding:10px 0 0 1px;display:flex;flex-direction:column;gap:2px;flex:none}
nav button{width:30px;height:30px;background:#2b2b2b;border-radius:4px 0 0 4px;color:#c4c4c4;flex:none}
nav .gap{margin-top:8px}nav .on{background:#424242}
.p{flex:1;padding:10px 9px 0 10px}
.p button{width:100%;height:21px;background:#2a2a2a;border-radius:4px;justify-content:space-between;padding:0 3px 0 8px;font-size:18px;line-height:20px}`,
`<header><ui-drop lined icon="props" label="Editor type"></ui-drop><ui-icon name="object"></ui-icon><span>Lid</span><ui-icon name="pin"></ui-icon></header>
<div class="b"><nav>${[['tool'],['render',1],['output'],['images'],['scene'],['world',0,'#c95f68'],['object',1,'#cf8a50'],['wrench',0,'#7eb2ff'],['particles',0,'#6f9fe0'],['physics',0,'#6f9fe0'],['constraint',0,'#6f9fe0'],['mesh',0,'#12b98c'],['material',0,'#c95f68']].map(([n,g,c])=>`<button type="button" class="${g?'gap':''} ${n==='wrench'?'on':''}" aria-label="${n}" style="${c?`color:${c}`:''}"><ui-icon name="${n}"></ui-icon></button>`).join('')}</nav>
<div class="p"><button type="button">Add Modifier<ui-icon name="chev" size="11"></ui-icon></button></div></div>`);

define('status-bar', `
:host{display:flex;align-items:center;height:24px;color:#a8a8a8;padding:0 19px 2px 11px;flex:none;text-shadow:1px 1px 1px #111;
background:linear-gradient(#6a6a6a,#6a6a6a) 48px 100%/343px 1px no-repeat,linear-gradient(#1a151a,#1a151a) 0 100%/100% 2px no-repeat,#303030}
ui-icon{margin-right:11px}
span{margin-right:15px}
kbd{font:13px/16px "DejaVu Sans",sans-serif;border:1px solid #999;border-radius:3px;width:19px;height:19px;display:inline-flex;align-items:center;justify-content:center;margin-right:8px;flex:none}
kbd.two{margin-right:4px}kbd.s{font-family:"DejaVu Sans Condensed","DejaVu Sans",sans-serif;font-size:9px}
kbd ui-icon{margin:0}
b{margin-left:auto;font-weight:400}`,
`<ui-icon name="lmb"></ui-icon><span>Confirm</span><ui-icon name="rmb"></ui-icon><span>Cancel</span><kbd class="s">Ctrl</kbd><span>Snap Invert</span><kbd class="two"><ui-icon name="shift" size="14"></ui-icon></kbd><kbd><ui-icon name="tabkey" size="14"></ui-icon></kbd><span>Snap Toggle</span><kbd>G</kbd><span>Move</span><kbd>R</kbd><span>Rotate</span><kbd>S</kbd><span>Resize</span><b>2.90.1</b>`);

define('blender-app', `
:host{display:flex;height:100vh;min-height:1100px}
.win{flex:1;min-width:0;display:flex;flex-direction:column;background:#1f1f1f}
main{flex:1;min-height:0;display:grid;grid-template-columns:minmax(0,1fr) 441px;column-gap:2px;padding:0 1px 1px}
.col{display:flex;flex-direction:column;gap:3px;min-height:0}
view-3d{flex:1}`,
`<left-edge></left-edge><div class="win"><title-bar></title-bar><menu-bar></menu-bar><main><div class="col"><view-3d></view-3d><time-line></time-line></div><div class="col"><scene-outliner></scene-outliner><property-editor></property-editor></div></main><status-bar></status-bar></div>`);
</script>
</body>
</html>
